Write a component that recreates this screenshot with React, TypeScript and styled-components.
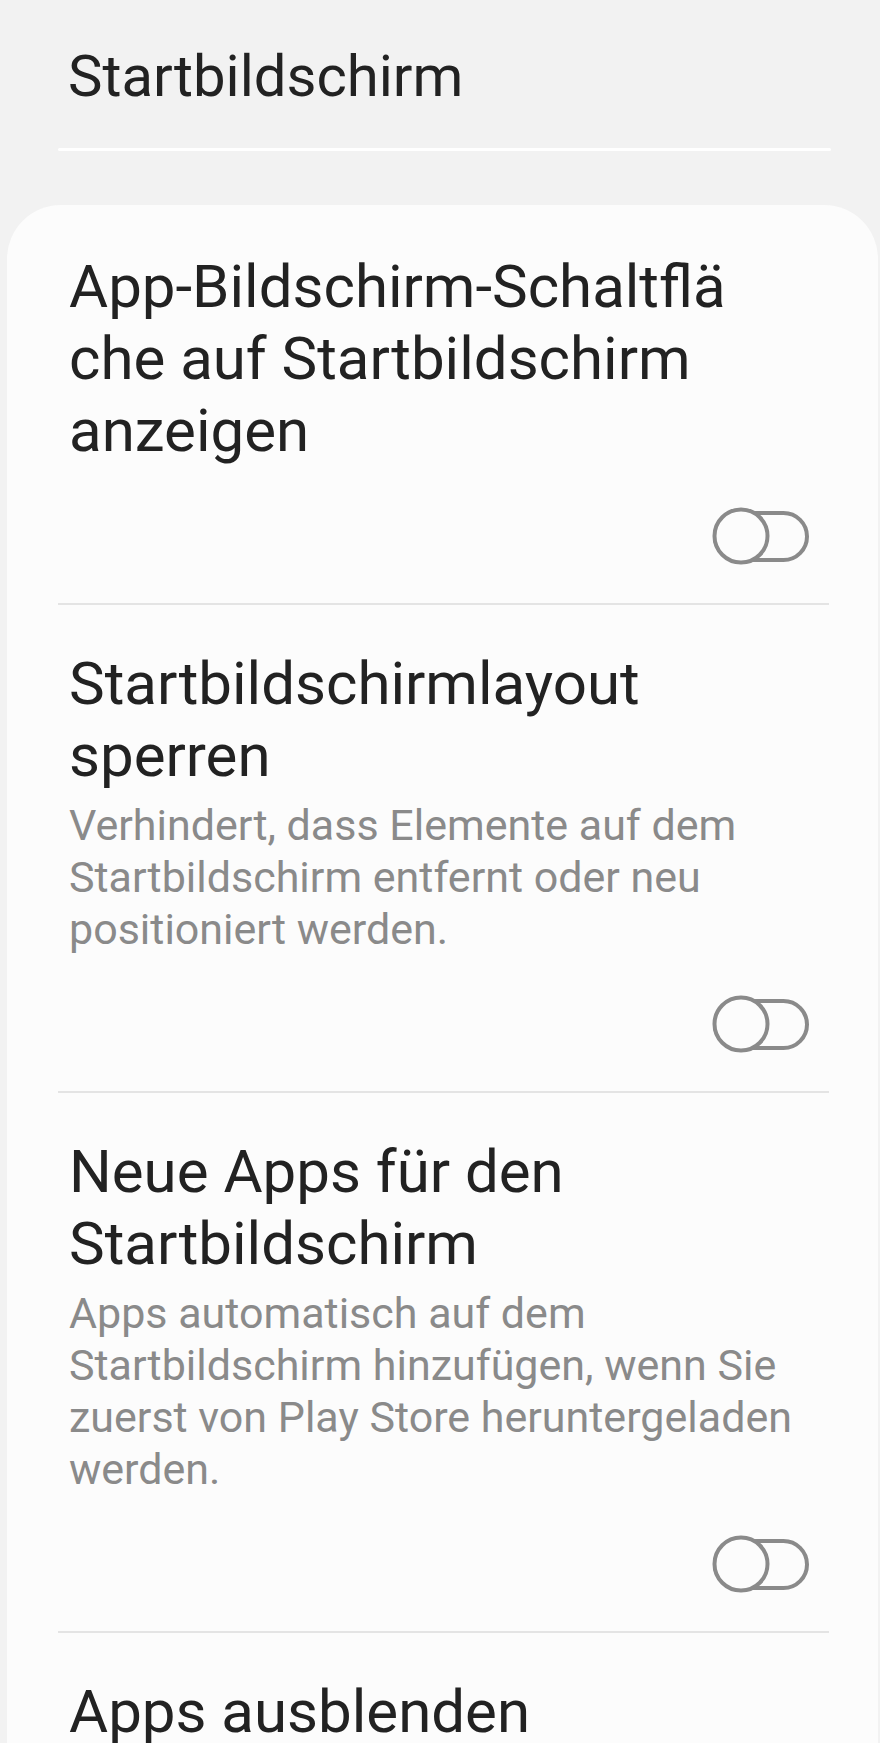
import React from 'react';
import styled, { createGlobalStyle } from 'styled-components';

const GlobalStyle = createGlobalStyle`
  html, body {
    margin: 0;
    padding: 0;
    background: #f2f2f2;
  }
  body {
    font-family: Roboto, "Noto Sans", "Liberation Sans", sans-serif;
    -webkit-font-smoothing: antialiased;
  }
`;

const Page = styled.div`
  width: 880px;
  min-height: 1743px;
  background: #f2f2f2;
  overflow: hidden;
`;

const Header = styled.header`
  padding: 40px 0 0 68px;
`;

const HeaderTitle = styled.h1`
  margin: 0;
  font-size: 58px;
  line-height: 72px;
  font-weight: 400;
  color: #222222;
`;

const HeaderRule = styled.div`
  height: 3px;
  margin: 36px 49px 0 58px;
  border-radius: 2px;
  background: #ffffff;
`;

const Card = styled.section`
  margin: 54px 2px 0 7px;
  padding-top: 3px;
  background: #fcfcfc;
  border-radius: 54px 54px 0 0;
`;

const Item = styled.div`
  padding: 43px 0 0 62px;
`;

const Title = styled.div`
  font-size: 60px;
  line-height: 72px;
  color: #222222;
  white-space: nowrap;
`;

const Description = styled.div`
  margin-top: 7px;
  font-size: 43px;
  line-height: 52px;
  color: #8a8a8a;
  white-space: nowrap;
`;

const ToggleRow = styled.div`
  display: flex;
  justify-content: flex-end;
  margin: 39px 67px 0 0;
  padding-bottom: 37px;
`;

const Divider = styled.div<{ $last?: boolean }>`
  height: 2px;
  margin: 0 49px 0 51px;
  background: #e4e4e4;
  display: ${(p) => (p.$last ? 'none' : 'block')};
`;

const Toggle = () => (
  <svg width="100" height="60" viewBox="0 0 100 60" aria-hidden>
    <rect x="4" y="7" width="92" height="47" rx="23.5" fill="none" stroke="#8a8a8a" strokeWidth="4" />
    <circle cx="30" cy="30" r="26.5" fill="#fcfcfc" stroke="#8a8a8a" strokeWidth="4" />
  </svg>
);

type Setting = {
  title: string[];
  description?: string[];
  toggle: boolean;
};

const settings: Setting[] = [
  {
    title: ['App-Bildschirm-Schaltflä', 'che auf Startbildschirm', 'anzeigen'],
    toggle: true,
  },
  {
    title: ['Startbildschirmlayout', 'sperren'],
    description: [
      'Verhindert, dass Elemente auf dem',
      'Startbildschirm entfernt oder neu',
      'positioniert werden.',
    ],
    toggle: true,
  },
  {
    title: ['Neue Apps für den', 'Startbildschirm'],
    description: [
      'Apps automatisch auf dem',
      'Startbildschirm hinzufügen, wenn Sie',
      'zuerst von Play Store heruntergeladen',
      'werden.',
    ],
    toggle: true,
  },
  {
    title: ['Apps ausblenden'],
    toggle: false,
  },
];

const Lines = ({ lines }: { lines: string[] }) => (
  <>
    {lines.map((l, i) => (
      <React.Fragment key={i}>
        {l}
        {i < lines.length - 1 && <br />}
      </React.Fragment>
    ))}
  </>
);

export default function App() {
  return (
    <Page>
      <GlobalStyle />
      <Header>
        <HeaderTitle>Startbildschirm</HeaderTitle>
      </Header>
      <HeaderRule />
      <Card>
        {settings.map((s, i) => (
          <React.Fragment key={i}>
            <Item>
              <Title>
                <Lines lines={s.title} />
              </Title>
              {s.description && (
                <Description>
                  <Lines lines={s.description} />
                </Description>
              )}
            </Item>
            {s.toggle && (
              <ToggleRow>
                <Toggle />
              </ToggleRow>
            )}
            <Divider $last={i === settings.length - 1} />
          </React.Fragment>
        ))}
      </Card>
    </Page>
  );
}
